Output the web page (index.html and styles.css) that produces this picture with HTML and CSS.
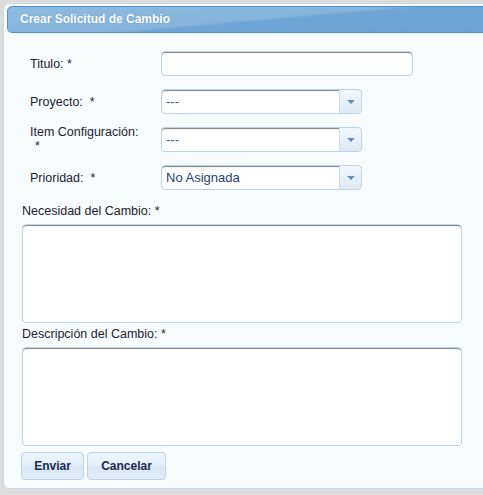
FILE: index.html
```html
<!DOCTYPE html>
<html lang="es">
<head>
<meta charset="utf-8">
<title>Crear Solicitud de Cambio</title>
<link rel="stylesheet" href="styles.css">
</head>
<body>
<div class="panel">
  <div class="header">Crear Solicitud de Cambio</div>
  <form class="form">
    <div class="fields">
      <label class="lbl">Titulo: *</label>
      <div class="input text-input"></div>

      <label class="lbl">Proyecto:&nbsp; *</label>
      <div class="input select"><span class="val dash">---</span><span class="arrow"></span></div>

      <label class="lbl lbl-top">Item Configuración:<br><span class="star">*</span></label>
      <div class="input select"><span class="val dash">---</span><span class="arrow"></span></div>

      <label class="lbl">Prioridad:&nbsp; *</label>
      <div class="input select"><span class="val">No Asignada</span><span class="arrow"></span></div>
    </div>

    <label class="area-lbl first">Necesidad del Cambio: *</label>
    <div class="input area"></div>

    <label class="area-lbl">Descripción del Cambio: *</label>
    <div class="input area"></div>

    <div class="buttons">
      <button type="button" class="btn btn-send">Enviar</button>
      <button type="button" class="btn btn-cancel">Cancelar</button>
    </div>
  </form>
</div>
</body>
</html>
```
FILE: styles.css
```css
html, body {
  margin: 0;
  padding: 0;
}
body {
  background: #dcdcdc;
  overflow: hidden;
  width: 483px;
  height: 495px;
  font-family: "Liberation Sans", Arial, Helvetica, sans-serif;
  font-size: 12.5px;
  color: #1c2233;
}
.panel {
  margin: 3px 0 0 3px;
  width: 520px;
  height: 486px;
  box-sizing: border-box;
  border: 1px solid #c9d9e4;
  border-radius: 6px;
  background: #f8fbfc;
  padding: 2px 0 0 3px;
}
.header {
  height: 25px;
  border: 1px solid #4a92d8;
  border-radius: 5px;
  background: linear-gradient(175deg, #8ebbe0 0%, #84b4dc 48%, #6fa6d6 52%, #6aa2d4 100%);
  color: #ffffff;
  font-weight: bold;
  font-size: 12px;
  line-height: 25px;
  padding-left: 12px;
  text-shadow: 0 0 1px rgba(60, 110, 170, 0.6);
}
.form {
  padding-left: 15px;
}
.fields {
  display: grid;
  grid-template-columns: 131px 252px;
  grid-auto-rows: 25px;
  row-gap: 13px;
  align-items: center;
  padding-left: 8px;
  margin-top: 18px;
}
.lbl {
  line-height: 14px;
}
.lbl-top {
  align-self: start;
  margin-top: -2px;
}
.lbl-top .star {
  padding-left: 5px;
}
.input {
  box-sizing: border-box;
  border: 1px solid #bcd3e8;
  border-radius: 4px;
  background: #ffffff;
  box-shadow: inset 0 2px 1px -1px #8a8a8a, inset 0 1px 0 #9a9a9a;
}
.text-input {
  width: 252px;
  height: 25px;
}
.select {
  width: 201px;
  height: 25px;
  display: flex;
  align-items: center;
  justify-content: space-between;
  overflow: hidden;
}
.val {
  padding-left: 4px;
  color: #1e3f74;
  font-size: 13px;
}
.val.dash {
  color: #2c5fa8;
}
.arrow {
  width: 22px;
  height: 100%;
  box-sizing: border-box;
  border-left: 1px solid #c9dcee;
  background: linear-gradient(#f1f7fd, #dde9f5);
  position: relative;
}
.arrow::after {
  content: "";
  position: absolute;
  left: 7px;
  top: 10px;
  border-left: 4px solid transparent;
  border-right: 4px solid transparent;
  border-top: 4px solid #5b8fc6;
}
.area-lbl {
  display: block;
  line-height: 14px;
  margin-top: 4px;
  margin-bottom: 6px;
}
.area-lbl.first {
  margin-top: 14px;
}
.area {
  width: 440px;
  height: 99px;
}
.buttons {
  display: flex;
  gap: 3px;
  margin-top: 6px;
  margin-left: -1px;
}
.btn {
  font-family: "Liberation Sans", Arial, Helvetica, sans-serif;
  font-size: 12px;
  font-weight: bold;
  color: #1d2a4c;
  height: 28px;
  border: 1px solid #bcd3e9;
  border-radius: 4px;
  background: linear-gradient(#edf5fd 0%, #e3eefa 50%, #d7e7f6 52%, #dfedf9 100%);
  padding: 0;
}
.btn-send {
  width: 63px;
}
.btn-cancel {
  width: 79px;
}
```
